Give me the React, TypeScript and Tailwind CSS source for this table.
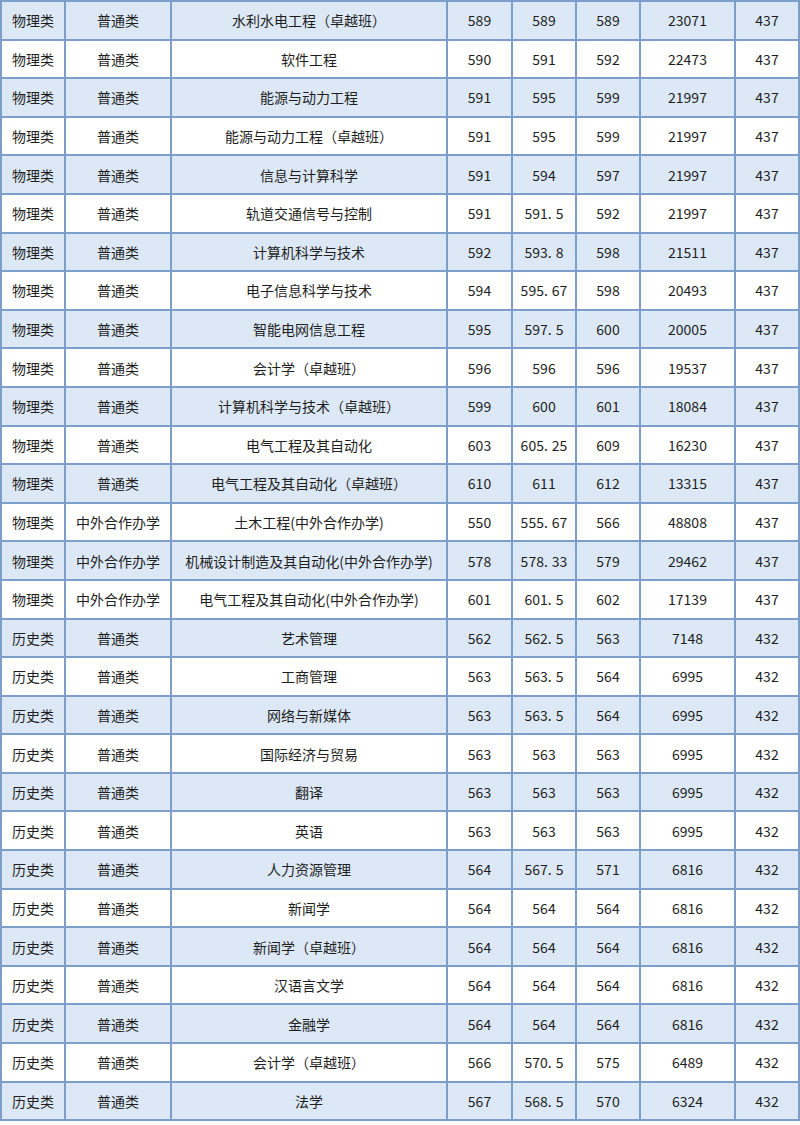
import React from "react";

type Row = [string, string, string, string, string, string, string, string];

const rows: Row[] = [
  ["物理类", "普通类", "水利水电工程（卓越班）", "589", "589", "589", "23071", "437"],
  ["物理类", "普通类", "软件工程", "590", "591", "592", "22473", "437"],
  ["物理类", "普通类", "能源与动力工程", "591", "595", "599", "21997", "437"],
  ["物理类", "普通类", "能源与动力工程（卓越班）", "591", "595", "599", "21997", "437"],
  ["物理类", "普通类", "信息与计算科学", "591", "594", "597", "21997", "437"],
  ["物理类", "普通类", "轨道交通信号与控制", "591", "591.5", "592", "21997", "437"],
  ["物理类", "普通类", "计算机科学与技术", "592", "593.8", "598", "21511", "437"],
  ["物理类", "普通类", "电子信息科学与技术", "594", "595.67", "598", "20493", "437"],
  ["物理类", "普通类", "智能电网信息工程", "595", "597.5", "600", "20005", "437"],
  ["物理类", "普通类", "会计学（卓越班）", "596", "596", "596", "19537", "437"],
  ["物理类", "普通类", "计算机科学与技术（卓越班）", "599", "600", "601", "18084", "437"],
  ["物理类", "普通类", "电气工程及其自动化", "603", "605.25", "609", "16230", "437"],
  ["物理类", "普通类", "电气工程及其自动化（卓越班）", "610", "611", "612", "13315", "437"],
  ["物理类", "中外合作办学", "土木工程(中外合作办学)", "550", "555.67", "566", "48808", "437"],
  ["物理类", "中外合作办学", "机械设计制造及其自动化(中外合作办学)", "578", "578.33", "579", "29462", "437"],
  ["物理类", "中外合作办学", "电气工程及其自动化(中外合作办学)", "601", "601.5", "602", "17139", "437"],
  ["历史类", "普通类", "艺术管理", "562", "562.5", "563", "7148", "432"],
  ["历史类", "普通类", "工商管理", "563", "563.5", "564", "6995", "432"],
  ["历史类", "普通类", "网络与新媒体", "563", "563.5", "564", "6995", "432"],
  ["历史类", "普通类", "国际经济与贸易", "563", "563", "563", "6995", "432"],
  ["历史类", "普通类", "翻译", "563", "563", "563", "6995", "432"],
  ["历史类", "普通类", "英语", "563", "563", "563", "6995", "432"],
  ["历史类", "普通类", "人力资源管理", "564", "567.5", "571", "6816", "432"],
  ["历史类", "普通类", "新闻学", "564", "564", "564", "6816", "432"],
  ["历史类", "普通类", "新闻学（卓越班）", "564", "564", "564", "6816", "432"],
  ["历史类", "普通类", "汉语言文学", "564", "564", "564", "6816", "432"],
  ["历史类", "普通类", "金融学", "564", "564", "564", "6816", "432"],
  ["历史类", "普通类", "会计学（卓越班）", "566", "570.5", "575", "6489", "432"],
  ["历史类", "普通类", "法学", "567", "568.5", "570", "6324", "432"],
];

function Num({ v }: { v: string }) {
  const i = v.indexOf(".");
  if (i < 0) return <>{v}</>;
  return (
    <>
      {v.slice(0, i)}.<span className="ml-[4px]">{v.slice(i + 1)}</span>
    </>
  );
}

export default function App() {
  return (
    <div
      className="w-[800px] h-[1125px] bg-white text-[14px] text-[#1e1e1e]"
      style={{ fontFamily: '"Noto Sans CJK SC", "Noto Sans", sans-serif' }}
    >
      <div className="grid grid-cols-[64px_106px_276px_65px_64px_64px_95px_64px] border-l-2 border-t-2 border-[#7d9ecb]">
        {rows.map((r, ri) => {
          const bg = ri % 2 === 0 ? "bg-[#dce8f6]" : "bg-white";
          return r.map((c, ci) => (
            <div
              key={`${ri}-${ci}`}
              className={`${bg} h-[38.6px] flex items-center ${
                ci === 0 ? "justify-start pl-[10px]" : "justify-center"
              } border-r-2 border-b-2 border-[#7d9ecb] whitespace-nowrap leading-none`}
            >
              {ci >= 3 ? <Num v={c} /> : c}
            </div>
          ));
        })}
      </div>
    </div>
  );
}
